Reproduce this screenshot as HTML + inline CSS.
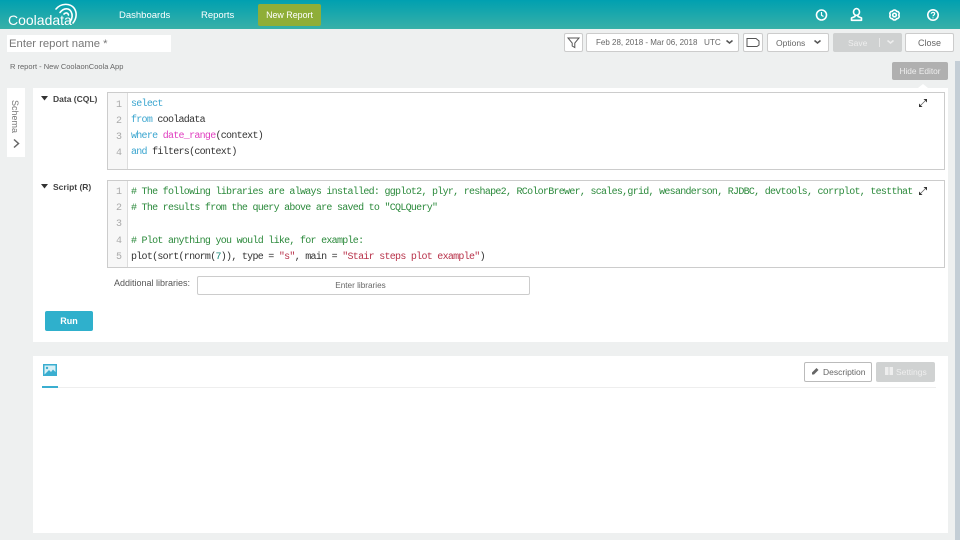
<!DOCTYPE html>
<html><head><meta charset="utf-8">
<style>
html,body{margin:0;padding:0;width:960px;height:540px;overflow:hidden;background:#eef0f0;font-family:"Liberation Sans",sans-serif;color:#555}
.a{position:absolute;white-space:nowrap;box-sizing:border-box}
.btn{background:#fff;border:1px solid #ccc;border-radius:2px;font-size:8.5px;color:#666;text-align:center}
.code{font-family:"Liberation Mono",monospace;font-size:10px;letter-spacing:-.72px;color:#333}
.ln{font-family:"Liberation Mono",monospace;font-size:10px;color:#aaa;text-align:right;background:#f7f7f7;border-right:1px solid #ddd;padding-right:5px}
.k{color:#3aa5cf}.m{color:#e040c0}.g{color:#2c8a3c}.r{color:#b8324a}.n{color:#1d8a7c}
.lab{font-size:8.5px;font-weight:bold;color:#444}
</style></head><body>
<div class="a" style="left:0;top:0;width:960px;height:29px;background:linear-gradient(#00a0b0,#38b0a8)"></div>
<div class="a" style="left:8px;top:12px;font-size:14px;color:#fff">Cooladata</div>
<svg class="a" style="left:52px;top:2px" width="28" height="24" fill="none" stroke="#fff" stroke-width="1.600" stroke-linecap="round"><path d="M4 7C9 1 18 1 22 6C25 10 25 16 21 21"/><path d="M8 10.500C12 5.500 17 6 19 9.500C21 13 20 17 18 20"/><path d="M12 12C14 10 16 11 16.500 13"/></svg>
<div class="a" style="left:119px;top:10px;font-size:9.500px;color:#fff">Dashboards</div>
<div class="a" style="left:201px;top:10px;font-size:9.500px;color:#fff">Reports</div>
<div class="a" style="left:258px;top:4px;width:63px;height:22px;background:#8fae38;border-radius:2px;color:#fff;font-size:8.900px;text-align:center;line-height:23px">New Report</div>
<svg class="a" style="left:814px;top:7px" width="130" height="16" fill="none" stroke="#fff" stroke-width="1.600"><circle cx="7.500" cy="8" r="5"/><path d="M7.500 5V8.300L9.500 9.500" stroke-width="1.200"/><ellipse cx="42.500" cy="5" rx="3" ry="3.400"/><path d="M41 8.500V9.500L37.500 11V13.300H47.500V11L44 9.500V8.500" stroke-linejoin="round"/><circle cx="80.500" cy="8" r="1.800"/><path d="M82.600 4.360A2.300 2.300 0 0 0 78.400 4.360A2.300 2.300 0 0 0 76.300 8A2.300 2.300 0 0 0 78.400 11.640A2.300 2.300 0 0 0 82.600 11.640A2.300 2.300 0 0 0 84.700 8A2.300 2.300 0 0 0 82.600 4.360Z"/><circle cx="119" cy="8" r="5.200"/><path d="M117.300 6.800C117.300 4.900 120.700 4.900 120.700 6.800C120.700 8 119 8 119 9.300M119 10.400V11.300" stroke-width="1.200"/></svg>
<div class="a" style="left:7px;top:35px;width:164px;height:17px;background:#fff;font-size:11.300px;color:#777;padding-left:2px;line-height:18px">Enter report name *</div>
<div class="a" style="left:10px;top:62px;font-size:7.500px;color:#666">R report - New CoolaonCoola App</div>
<div class="a btn" style="left:564px;top:33px;width:19px;height:19px"></div>
<svg class="a" style="left:566px;top:36px" width="15" height="13" fill="none" stroke="#555" stroke-width="1"><path d="M2 2H13L8.800 7V11.500L6.200 10V7Z"/></svg>
<div class="a btn" style="left:586px;top:33px;width:153px;height:19px"></div>
<div class="a" style="left:596px;top:37.500px;font-size:8px;color:#666">Feb 28, 2018 - Mar 06, 2018</div>
<div class="a" style="left:704px;top:37.500px;font-size:8.200px;color:#666">UTC</div>
<svg class="a" style="left:725px;top:39px" width="9" height="6" fill="none" stroke="#555" stroke-width="1.500"><path d="M1.500 1.500L4.500 4L7.500 1.500"/></svg>
<div class="a btn" style="left:743px;top:33px;width:20px;height:19px"></div>
<svg class="a" style="left:745px;top:36px" width="16" height="13" fill="none" stroke="#555" stroke-width="1"><path d="M2 2.500H11L14 5V9L12 10.500H2Z"/></svg>
<div class="a btn" style="left:767px;top:33px;width:62px;height:19px;line-height:19px;text-align:left;padding-left:8px">Options</div>
<svg class="a" style="left:813px;top:39px" width="9" height="6" fill="none" stroke="#555" stroke-width="1.500"><path d="M1.500 1.500L4.500 4L7.500 1.500"/></svg>
<div class="a" style="left:833px;top:33px;width:69px;height:19px;background:#cfd1d1;border-radius:2px;color:#eee;font-size:8.500px;line-height:20px;padding-left:15px">Save</div>
<div class="a" style="left:879px;top:38px;width:1px;height:9px;background:#e8e8e8"></div>
<svg class="a" style="left:886px;top:39px" width="9" height="6" fill="none" stroke="#eee" stroke-width="1.500"><path d="M1.500 1.500L4.500 4L7.500 1.500"/></svg>
<div class="a btn" style="left:905px;top:33px;width:49px;height:19px;line-height:19px;font-size:9px">Close</div>
<div class="a" style="left:955px;top:61px;width:5px;height:479px;background:#c4ced6"></div>
<div class="a" style="left:33px;top:88px;width:915px;height:254px;background:#fff"></div>
<div class="a" style="left:892px;top:62px;width:56px;height:18px;background:#b0b0b0;border-radius:2px;color:#eee;font-size:8.300px;line-height:19px;text-align:center">Hide Editor</div>
<svg class="a" style="left:918px;top:84px" width="10" height="4"><path d="M0 4L5 0L10 4Z" fill="#fff"/></svg>
<div class="a" style="left:7px;top:88px;width:18px;height:69px;background:#fff"></div>
<div class="a" style="left:10px;top:100px;font-size:9px;color:#777;writing-mode:vertical-rl">Schema</div>
<svg class="a" style="left:11px;top:138px" width="10" height="11" fill="none" stroke="#666" stroke-width="1.500"><path d="M3 1.500L7.500 5.500L3 9.500"/></svg>
<svg class="a" style="left:40px;top:95px" width="9" height="7"><path d="M1 1H8L4.500 5.500Z" fill="#333"/></svg>
<div class="a lab" style="left:53px;top:94px">Data (CQL)</div>
<div class="a" style="left:107px;top:92px;width:838px;height:78px;border:1px solid #ccc;background:#fff"></div>
<div class="a ln" style="left:108px;top:93px;width:20px;height:76px;padding-top:5px;line-height:16px">1<br>2<br>3<br>4</div>
<div class="a code" style="left:131px;top:97px;line-height:16px"><span class="k">select</span><br><span class="k">from</span> cooladata<br><span class="k">where</span> <span class="m">date_range</span>(context)<br><span class="k">and</span> filters(context)</div>
<svg class="a" style="left:917px;top:98px" width="11" height="11" fill="#333"><path d="M2 9V5.500L5.500 9Z"/><path d="M10 1V4.500L6.500 1Z"/><path d="M4 7L8 3" stroke="#666" stroke-width=".8"/></svg>
<svg class="a" style="left:40px;top:183px" width="9" height="7"><path d="M1 1H8L4.500 5.500Z" fill="#333"/></svg>
<div class="a lab" style="left:53px;top:182px">Script (R)</div>
<div class="a" style="left:107px;top:180px;width:838px;height:88px;border:1px solid #ccc;background:#fff"></div>
<div class="a ln" style="left:108px;top:181px;width:20px;height:86px;padding-top:4px;line-height:16.200px">1<br>2<br>3<br>4<br>5</div>
<div class="a code" style="left:131px;top:185px;line-height:16.200px"><span class="g"># The following libraries are always installed: ggplot2, plyr, reshape2, RColorBrewer, scales,grid, wesanderson, RJDBC, devtools, corrplot, testthat</span><br><span class="g"># The results from the query above are saved to "CQLQuery"</span><br><br><span class="g"># Plot anything you would like, for example:</span><br>plot(sort(rnorm(<span class="n">7</span>)), type = <span class="r">"s"</span>, main = <span class="r">"Stair steps plot example"</span>)</div>
<svg class="a" style="left:917px;top:186px" width="11" height="11" fill="#333"><path d="M2 9V5.500L5.500 9Z"/><path d="M10 1V4.500L6.500 1Z"/><path d="M4 7L8 3" stroke="#666" stroke-width=".8"/></svg>
<div class="a" style="left:114px;top:278px;font-size:9px;color:#555">Additional libraries:</div>
<div class="a" style="left:197px;top:276px;width:333px;height:19px;border:1px solid #ccc;border-radius:2px;background:#fff;font-size:8.200px;color:#666;text-align:center;line-height:18px;padding-right:6px">Enter libraries</div>
<div class="a" style="left:45px;top:311px;width:48px;height:20px;background:#2fb0cc;border-radius:2px;color:#fff;font-size:9px;font-weight:bold;text-align:center;line-height:21px">Run</div>
<div class="a" style="left:33px;top:356px;width:915px;height:177px;background:#fff"></div>
<svg class="a" style="left:43px;top:364px" width="14" height="12"><rect x=".5" y=".5" width="13" height="11" fill="#3aaed0" stroke="#3aaed0"/><rect x="1.500" y="1.500" width="11" height="9" fill="#d8f0f6"/><circle cx="4" cy="4" r="1.200" fill="#3aaed0"/><path d="M1.500 10.500L6 6L8 8L10 5.500L12.500 8V10.500Z" fill="#3aaed0"/></svg>
<div class="a" style="left:42px;top:387px;width:894px;height:1px;background:#eee"></div>
<div class="a" style="left:42px;top:386px;width:16px;height:2px;background:#3aaed0"></div>
<div class="a btn" style="left:804px;top:362px;width:68px;height:20px;line-height:19px;text-align:left;padding-left:18px;border-color:#bbb">Description</div>
<svg class="a" style="left:810px;top:366px" width="10" height="10" fill="#666"><path d="M2 8.500V6.500L6.500 2L8.500 4L4 8.500Z"/></svg>
<div class="a" style="left:876px;top:362px;width:59px;height:20px;background:#d0d2d2;border-radius:2px;color:#eee;font-size:8.500px;line-height:20px;padding-left:20px">Settings</div>
<svg class="a" style="left:884px;top:366px" width="10" height="10" fill="#eee"><rect x="1" y="1" width="3.500" height="8"/><rect x="5.500" y="1" width="3.500" height="8"/></svg>
</body></html>
